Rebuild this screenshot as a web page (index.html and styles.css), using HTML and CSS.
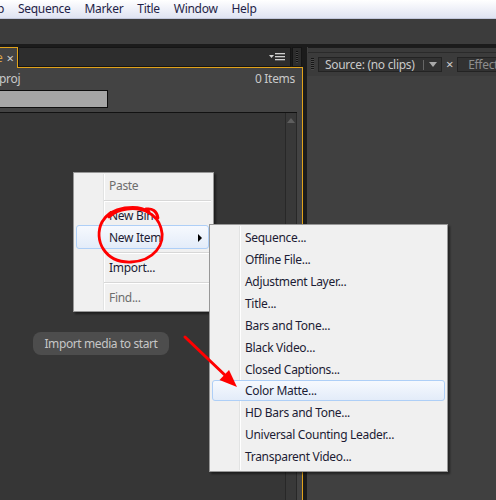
FILE: index.html
```html
<!DOCTYPE html>
<html>
<head>
<meta charset="utf-8">
<link rel="stylesheet" href="styles.css">
</head>
<body>
<div class="app">
  <div class="menubar">
    <span class="mi first">Clip</span><span class="mi">Sequence</span><span class="mi">Marker</span><span class="mi">Title</span><span class="mi">Window</span><span class="mi">Help</span>
  </div>
  <div class="toolbar"></div>
  <div class="workspace">
    <div class="left">
      <div class="tabrow">
        <div class="tab-active"><span class="tab-label">e</span><span class="tab-x">×</span></div>
        <div class="tabstrip">
          <svg class="panelmenu" width="16" height="8" viewBox="0 0 16 8">
            <path d="M0 2 L5 2 L2.5 5 Z" fill="#d0d0d0"/>
            <rect x="6" y="0" width="10" height="1.3" fill="#d0d0d0"/>
            <rect x="6" y="3" width="10" height="1.3" fill="#d0d0d0"/>
            <rect x="6" y="6" width="10" height="1.3" fill="#d0d0d0"/>
          </svg>
        </div>
        <div class="grip"></div>
      </div>
      <div class="pbody">
        <div class="inforow"><span class="projname">proj</span><span class="items">0 Items</span></div>
        <div class="search"></div>
        <div class="list">
          <div class="listmain">
            <div class="pill">Import media to start</div>
          </div>
          <div class="scroll"><span class="up"></span></div>
        </div>
      </div>
    </div>
    <div class="right">
      <div class="rstrip"></div>
      <div class="rtabs">
        <div class="rgrip"></div>
        <div class="srctab">
          <span class="srclabel">Source: (no clips)</span>
          <span class="srcsep"></span>
          <span class="srcdrop"></span>
        </div>
        <span class="rx">×</span>
        <div class="efftab"><span>Effect</span></div>
      </div>
      <div class="rcontent"></div>
    </div>
  </div>

  <div class="menu menu1">
    <div class="mitem disabled">Paste</div>
    <div class="msep"></div>
    <div class="mitem">New Bin</div>
    <div class="mitem hl">New Item<span class="subarrow"></span></div>
    <div class="msep"></div>
    <div class="mitem">Import...</div>
    <div class="msep"></div>
    <div class="mitem disabled">Find...</div>
  </div>

  <div class="menu menu2">
    <div class="mitem">Sequence...</div>
    <div class="mitem">Offline File...</div>
    <div class="mitem">Adjustment Layer...</div>
    <div class="mitem">Title...</div>
    <div class="mitem">Bars and Tone...</div>
    <div class="mitem">Black Video...</div>
    <div class="mitem">Closed Captions...</div>
    <div class="mitem hl2">Color Matte...</div>
    <div class="mitem">HD Bars and Tone...</div>
    <div class="mitem">Universal Counting Leader...</div>
    <div class="mitem">Transparent Video...</div>
  </div>

  <svg class="annot" width="496" height="500" viewBox="0 0 496 500">
    <path d="M149 212 C138 204, 111 206, 102 222 C93 240, 105 263, 131 262 C154 261, 166 244, 161 228 C157 214, 143 207, 127 209 C119 210, 113 213, 109 217 M146 209 C152 208, 157 211, 158 218" fill="none" stroke="#ff0000" stroke-width="2.8" stroke-linecap="round"/>
    <line x1="185" y1="337" x2="228" y2="378" stroke="#ff0000" stroke-width="3" stroke-linecap="round"/>
    <path d="M237 387 L219.5 380 L229 370 Z" fill="#ff0000"/>
  </svg>
</div>
</body>
</html>
```

FILE: styles.css
```css
html, body {
  margin: 0;
  padding: 0;
}
body {
  background: #1b1b1b;
  font-family: "Noto Sans", "Open Sans", sans-serif;
  font-size: 12px;
  letter-spacing: -0.3px;
  width: 496px;
  height: 500px;
  overflow: hidden;
}
.app {
  position: relative;
  width: 496px;
  height: 500px;
  display: flex;
  flex-direction: column;
  overflow: hidden;
}
.menubar {
  height: 18px;
  flex: none;
  background: linear-gradient(#ffffff, #dfe3f2);
  border-bottom: 1px solid #c2c7dc;
  display: flex;
  align-items: center;
  color: #1f1f48;
  white-space: nowrap;
  line-height: 18px;
}
.mi {
  padding: 0 7px;
}
.mi.first {
  margin-left: -23px;
}
.toolbar {
  height: 25px;
  flex: none;
  background: #3c3c3c;
}
.workspace {
  flex: 1;
  display: flex;
  gap: 4px;
  background: #1b1b1b;
  padding-top: 3px;
  min-height: 0;
}
.left {
  width: 303px;
  flex: none;
  display: flex;
  flex-direction: column;
}
.tabrow {
  height: 20px;
  flex: none;
  display: flex;
  align-items: flex-start;
  position: relative;
  z-index: 1;
}
.tab-active {
  width: 18px;
  height: 21px;
  box-sizing: border-box;
  background: #434343;
  border-top: 1px solid #e2a31a;
  border-right: 1px solid #e2a31a;
  display: flex;
  align-items: center;
  color: #cfcfcf;
  line-height: 18px;
}
.tab-label {
  margin-left: -4px;
  color: #d9a44a;
}
.tab-x {
  margin-left: 4px;
  font-size: 13px;
}
.tabstrip {
  width: 273px;
  height: 20px;
  box-sizing: border-box;
  background: #2d2d2d;
  border: 1px solid #151515;
  display: flex;
  align-items: center;
  justify-content: flex-end;
  padding-right: 5px;
}
.grip {
  width: 10px;
  height: 20px;
  box-sizing: border-box;
  margin-left: 1px;
  background: #2d2d2d;
  border: 1px solid #151515;
  position: relative;
}
.grip::after {
  content: "";
  position: absolute;
  left: 3px;
  top: 3px;
  width: 2px;
  height: 12px;
  background: repeating-linear-gradient(#111 0 1px, #444 1px 2px);
}
.pbody {
  flex: 1;
  min-height: 0;
  background: #434343;
  border-top: 1px solid #e2a31a;
  border-right: 1px solid #e2a31a;
  display: flex;
  flex-direction: column;
}
.inforow {
  height: 20px;
  flex: none;
  display: flex;
  justify-content: space-between;
  align-items: center;
  padding-right: 7px;
  color: #c9c9c9;
}
.projname {
  margin-left: -1px;
}
.search {
  width: 109px;
  height: 18px;
  box-sizing: border-box;
  flex: none;
  margin-top: 2px;
  margin-left: -1px;
  border: 1px solid #0e0e0e;
  background: #a6a6a6;
}
.list {
  flex: 1;
  margin-top: 4px;
  margin-right: 5px;
  border-top: 1px solid #121212;
  background: #363636;
  display: flex;
  min-height: 0;
}
.listmain {
  flex: 1;
}
.pill {
  width: 136px;
  box-sizing: border-box;
  margin-top: 219px;
  margin-left: 33px;
  height: 23px;
  border-radius: 8px;
  background: #4d4d4d;
  color: #c6c6c6;
  line-height: 23px;
  white-space: nowrap;
  text-align: center;
  letter-spacing: -0.4px;
}
.scroll {
  width: 12px;
  box-sizing: border-box;
  border-left: 1px solid #282828;
  border-right: 1px solid #282828;
  background: #393939;
  display: flex;
  justify-content: center;
}
.up {
  margin-top: 5px;
  width: 0;
  height: 0;
  border-left: 4px solid transparent;
  border-right: 4px solid transparent;
  border-bottom: 5px solid #5e5e5e;
}
.right {
  flex: 1;
  display: flex;
  flex-direction: column;
  background: #404040;
}
.rstrip {
  height: 6px;
  flex: none;
  box-sizing: border-box;
  margin-left: 1px;
  background: #3a3a3a;
  border-top: 1px solid #1c1c1c;
  border-bottom: 1px solid #2a2a2a;
}
.rtabs {
  height: 23px;
  flex: none;
  background: #3b3b3b;
  display: flex;
  align-items: flex-start;
  padding-top: 4px;
  box-sizing: border-box;
}
.rgrip {
  width: 3px;
  height: 12px;
  margin-left: 4px;
  margin-top: 1px;
  background: repeating-linear-gradient(#151515 0 1px, #4a4a4a 1px 2px);
}
.srctab {
  width: 124px;
  height: 15px;
  box-sizing: border-box;
  margin-left: 4px;
  background: #323232;
  border: 1px solid #232323;
  display: flex;
  align-items: center;
  color: #c9c9c9;
  line-height: 13px;
}
.srclabel {
  padding-left: 6px;
  white-space: nowrap;
}
.srcsep {
  margin-left: auto;
  width: 1px;
  height: 10px;
  background: #666;
}
.srcdrop {
  margin-left: 5px;
  margin-right: 4px;
  width: 0;
  height: 0;
  border-left: 4px solid transparent;
  border-right: 4px solid transparent;
  border-top: 5px solid #a9a9a9;
}
.rx {
  margin-left: 4px;
  color: #cfcfcf;
  font-size: 13px;
  line-height: 15px;
}
.efftab {
  flex: 1;
  height: 15px;
  box-sizing: border-box;
  margin-left: 4px;
  background: #323232;
  border: 1px solid #232323;
  border-right: none;
  color: #8d8d8d;
  line-height: 13px;
  padding-left: 10px;
  white-space: nowrap;
  overflow: hidden;
}
.rcontent {
  flex: 1;
}

/* context menus */
.menu {
  position: absolute;
  box-sizing: border-box;
  background: #f0f0f0;
  border: 1px solid #979797;
  box-shadow: 2px 2px 2px rgba(0, 0, 0, 0.45);
  padding: 2px 2px;
  color: #1c1c34;
  font-size: 12px;
}
.menu::before {
  content: "";
  position: absolute;
  left: 29px;
  top: 1px;
  bottom: 1px;
  width: 1px;
  background: #e2e3e3;
  border-right: 1px solid #ffffff;
}
.menu1 {
  left: 73px;
  top: 172px;
  width: 141px;
  height: 140px;
}
.menu2 {
  left: 209px;
  top: 224px;
  width: 239px;
  height: 248px;
  padding-top: 2px;
}
.mitem {
  position: relative;
  height: 22px;
  line-height: 22px;
  padding-left: 33px;
  white-space: nowrap;
  box-sizing: border-box;
}
.mitem.disabled {
  color: #6d6d6d;
}
.msep {
  height: 8px;
  position: relative;
}
.msep::after {
  content: "";
  position: absolute;
  left: 28px;
  right: 0;
  top: 3px;
  height: 1px;
  background: #d7d7d7;
  border-bottom: 1px solid #ffffff;
}
.hl, .hl2 {
  border: 1px solid #aecff7;
  border-radius: 3px;
  background: linear-gradient(#f6f9fe, #e3ecf9);
  padding-left: 32px;
  line-height: 20px;
}
.hl {
  height: 24px;
  margin-top: -2px;
  margin-right: 2px;
  line-height: 24px;
}
.hl2 {
  height: 21px;
  margin-top: -1px;
  margin-bottom: 1px;
  line-height: 20px;
}
.subarrow {
  position: absolute;
  right: 6px;
  top: 8px;
  width: 0;
  height: 0;
  border-top: 4px solid transparent;
  border-bottom: 4px solid transparent;
  border-left: 4px solid #000;
}
.annot {
  position: absolute;
  left: 0;
  top: 0;
  pointer-events: none;
  z-index: 10;
}
```
